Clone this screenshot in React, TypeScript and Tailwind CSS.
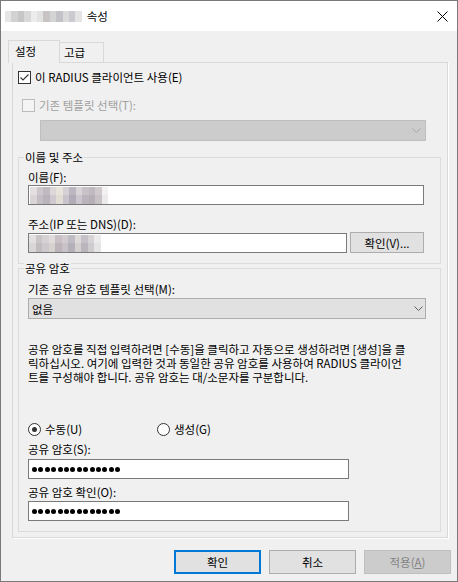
import React from 'react';

const titleCells = ['#e6e6e6', '#d2d2d2', '#c6c6c6', '#d8d8d8', '#ececec', '#e2e2e2', '#c8c4c4', '#d4d4d4', '#c2c2c8', '#dadada', '#cacad0', '#e4e4e4'];

const nameCells = [
    ['#e4e0e2', '#cdc6ca', '#c0bac0', '#dcd8d8', '#e8e4dc', '#d4d0d4', '#bcb6c0', '#d8d4d8', '#c8c2c8', '#c0bac0', '#d0cacc', '#f2f0f0'],
    ['#dad4d6', '#c4bec4', '#b8b2ba', '#d0cad0', '#e2ddd4', '#c8c2ca', '#b2acb8', '#ccc6ce', '#bcb4bc', '#b6b0b6', '#c8c2c6', '#eceaea'],
];

const addrCells = [
    ['#e2e0e0', '#cac6c8', '#d6d2d4', '#e0dcdc', '#c8c0c4', '#d2ccd0', '#c0bcc4', '#dedada', '#c6c0c8', '#d8d4d6', '#ecebeb'],
    ['#d8d6d6', '#c0bcc0', '#ccc8cc', '#d6d2d0', '#bcb4b8', '#c8c2c8', '#b4b0ba', '#d4d0d0', '#bab4bc', '#ceccce', '#e6e4e4'],
];

const Mosaic = ({ rows, w, h }: { rows: string[][]; w: number; h: number }) => (
    <div className="flex flex-col">
        {rows.map((row, i) => (
            <div key={i} className="flex">
                {row.map((c, j) => (
                    <div key={j} style={{ width: w, height: h, background: c }} />
                ))}
            </div>
        ))}
    </div>
);

const Chevron = ({ color }: { color: string }) => (
    <svg width="9" height="5" viewBox="0 0 9 5">
        <polyline points="0.5,0.5 4.5,4.5 8.5,0.5" fill="none" stroke={color} strokeWidth="1" />
    </svg>
);

const Dots = () => (
    <div className="flex items-center gap-[1.4px] pl-[3px]">
        {Array.from({ length: 14 }).map((_, i) => (
            <span key={i} className="w-[5px] h-[5px] rounded-full bg-black" />
        ))}
    </div>
);

const Label = ({ children }: { children: React.ReactNode }) => (
    <div className="leading-[15px] h-[15px] whitespace-nowrap">{children}</div>
);

const App = () => {
    return (
        <div className="w-[458px] h-[582px] bg-[#f0f0f0] border border-[#7a7a7a] flex flex-col text-[11.5px] text-black font-['Noto_Sans_CJK_KR',sans-serif] overflow-hidden">
            {/* title bar */}
            <div className="h-[30px] bg-white flex items-center pl-[4px] shrink-0">
                <Mosaic rows={[titleCells]} w={6.4} h={11} />
                <span className="ml-[5px] leading-[14px]">속성</span>
                <svg className="ml-auto mr-[9px]" width="11" height="11" viewBox="0 0 11 11">
                    <path d="M0.5 0.5 L10.5 10.5 M10.5 0.5 L0.5 10.5" stroke="#000" strokeWidth="1" />
                </svg>
            </div>

            {/* tabs */}
            <div className="flex items-start pl-[7px] mt-[9px] h-[22px] relative z-10">
                <div className="w-[52px] h-[23px] border-l border-t border-r border-[#d9d9d9] bg-[#f0f0f0] pl-[6px] flex items-center">
                    설정
                </div>
                <div className="w-[44px] h-[20px] mt-[2px] border-t border-r border-[#d9d9d9] bg-[#f0f0f0] pl-[4px] flex items-center">
                    고급
                </div>
            </div>

            {/* tab page */}
            <div className="ml-[11px] w-[436px] border border-[#d9d9d9] shadow-[1px_1px_0_#ffffff] flex flex-col">
                <div className="flex items-center h-[13px] mt-[8px] pl-[5px]">
                    <div className="w-[13px] h-[13px] border border-[#333333] bg-white">
                        <svg width="11" height="11" viewBox="0 0 11 11">
                            <polyline points="1.5,5.5 4,8 9.5,2.5" fill="none" stroke="#333" strokeWidth="1.1" />
                        </svg>
                    </div>
                    <span className="ml-[4px] leading-[13px]">이 RADIUS 클라이언트 사용(E)</span>
                </div>

                <div className="flex items-center h-[13px] mt-[15px] pl-[9px] text-[#a0a0a0]">
                    <div className="w-[13px] h-[13px] border border-[#bcbcbc] bg-[#f4f4f4]" />
                    <span className="ml-[4px] leading-[13px]">기존 템플릿 선택(T):</span>
                </div>

                <div className="ml-[27px] mt-[8px] w-[386px] h-[21px] bg-[#cccccc] border border-[#bfbfbf] flex items-center justify-end pr-[4px]">
                    <Chevron color="#a6a6a6" />
                </div>

                {/* 이름 및 주소 */}
                <div className="relative ml-[5px] mt-[16px] w-[423px] border border-[#dcdcdc] pl-[9px] pb-[10px]">
                    <span className="absolute -top-[8px] left-[5px] px-[1px] bg-[#f0f0f0] leading-[15px]">이름 및 주소</span>
                    <div className="mt-[12px]">
                        <Label>이름(F):</Label>
                    </div>
                    <div className="w-[396px] h-[20px] border border-[#7a7a7a] bg-white flex items-center pl-[1px]">
                        <Mosaic rows={nameCells} w={6.5} h={8.5} />
                    </div>
                    <div className="mt-[12px]">
                        <Label>주소(IP 또는 DNS)(D):</Label>
                    </div>
                    <div className="flex items-end gap-[3px]">
                        <div className="w-[319px] h-[20px] border border-[#7a7a7a] bg-white flex items-center">
                            <Mosaic rows={addrCells} w={6.5} h={8.5} />
                        </div>
                        <div className="w-[74px] h-[21px] bg-[#e1e1e1] border border-[#adadad] flex items-center justify-center leading-[14px]">
                            확인(V)...
                        </div>
                    </div>
                </div>

                {/* 공유 암호 */}
                <div className="relative ml-[5px] mt-[4px] w-[423px] border border-[#dcdcdc] pl-[9px] pb-[10px]">
                    <span className="absolute -top-[8px] left-[5px] px-[1px] bg-[#f0f0f0] leading-[15px]">공유 암호</span>
                    <div className="mt-[13px]">
                        <Label>기존 공유 암호 템플릿 선택(M):</Label>
                    </div>
                    <div className="mt-[1px] w-[398px] h-[21px] bg-[#e1e1e1] border border-[#adadad] flex items-center justify-between pl-[3px] pr-[2px]">
                        <span className="leading-[14px]">없음</span>
                        <Chevron color="#606060" />
                    </div>

                    <div className="mt-[23px] leading-[14px] whitespace-nowrap">
                        <div>공유 암호를 직접 입력하려면 [수동]을 클릭하고 자동으로 생성하려면 [생성]을 클</div>
                        <div>릭하십시오. 여기에 입력한 것과 동일한 공유 암호를 사용하여 RADIUS 클라이언</div>
                        <div>트를 구성해야 합니다. 공유 암호는 대/소문자를 구분합니다.</div>
                    </div>

                    <div className="flex items-center h-[13px] mt-[39px]">
                        <div className="w-[129px] flex items-center">
                            <div className="w-[13px] h-[13px] rounded-full border border-[#333333] bg-white flex items-center justify-center">
                                <span className="w-[5px] h-[5px] rounded-full bg-[#333333]" />
                            </div>
                            <span className="ml-[4px] leading-[13px]">수동(U)</span>
                        </div>
                        <div className="flex items-center">
                            <div className="w-[13px] h-[13px] rounded-full border border-[#333333] bg-white" />
                            <span className="ml-[4px] leading-[13px]">생성(G)</span>
                        </div>
                    </div>

                    <div className="mt-[6px]">
                        <Label>공유 암호(S):</Label>
                    </div>
                    <div className="mt-[2px] w-[321px] h-[20px] border border-[#7a7a7a] bg-white flex items-center">
                        <Dots />
                    </div>
                    <div className="mt-[6px]">
                        <Label>공유 암호 확인(O):</Label>
                    </div>
                    <div className="mt-[1px] w-[321px] h-[20px] border border-[#7a7a7a] bg-white flex items-center">
                        <Dots />
                    </div>
                </div>
                <div className="h-[5px]" />
            </div>

            {/* buttons */}
            <div className="flex justify-end gap-[8px] pr-[6px] mt-[12px]">
                <div className="w-[87px] h-[24px] bg-[#e1e1e1] border-2 border-[#0078d7] flex items-center justify-center leading-[14px]">
                    확인
                </div>
                <div className="w-[87px] h-[24px] bg-[#e1e1e1] border border-[#adadad] flex items-center justify-center leading-[14px]">
                    취소
                </div>
                <div className="w-[87px] h-[24px] bg-[#cccccc] border border-[#bfbfbf] flex items-center justify-center leading-[14px] text-[#838383]">
                    적용(<span className="underline">A</span>)
                </div>
            </div>
        </div>
    );
};

export default App;
